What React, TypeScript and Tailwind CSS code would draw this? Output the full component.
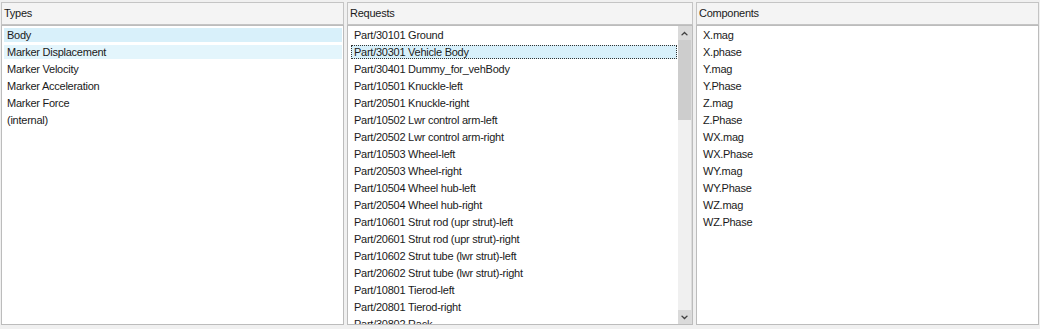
import React from "react";

const types = [
  "Body",
  "Marker Displacement",
  "Marker Velocity",
  "Marker Acceleration",
  "Marker Force",
  "(internal)",
];

const requests = [
  "Part/30101 Ground",
  "Part/30301 Vehicle Body",
  "Part/30401 Dummy_for_vehBody",
  "Part/10501 Knuckle-left",
  "Part/20501 Knuckle-right",
  "Part/10502 Lwr control arm-left",
  "Part/20502 Lwr control arm-right",
  "Part/10503 Wheel-left",
  "Part/20503 Wheel-right",
  "Part/10504 Wheel hub-left",
  "Part/20504 Wheel hub-right",
  "Part/10601 Strut rod (upr strut)-left",
  "Part/20601 Strut rod (upr strut)-right",
  "Part/10602 Strut tube (lwr strut)-left",
  "Part/20602 Strut tube (lwr strut)-right",
  "Part/10801 Tierod-left",
  "Part/20801 Tierod-right",
  "Part/30802 Rack",
];

const components = [
  "X.mag",
  "X.phase",
  "Y.mag",
  "Y.Phase",
  "Z.mag",
  "Z.Phase",
  "WX.mag",
  "WX.Phase",
  "WY.mag",
  "WY.Phase",
  "WZ.mag",
  "WZ.Phase",
];

type RowState = "none" | "selected" | "hover" | "focus";

function Row({ label, state }: { label: string; state: RowState }) {
  return (
    <div className="h-[17px] pt-[2px] pb-[1px] pl-[2px] pr-[1px]">
      <div
        className={
          "h-[14px] pl-[3px] leading-[14px] whitespace-nowrap tracking-[-0.25px] " +
          (state === "selected"
            ? "bg-[#d8f0fa]"
            : state === "hover"
              ? "bg-[#e3f5fc]"
              : state === "focus"
                ? "bg-[#d8f0fa] outline outline-1 outline-dotted outline-[#333] -outline-offset-1"
                : "")
        }
      >
        {label}
      </div>
    </div>
  );
}

function Header({ title }: { title: string }) {
  return (
    <div className="h-[23px] border border-[#c4c4c4] bg-[#f4f4f4] pl-[2px] leading-[21px] tracking-[-0.25px]">
      {title}
    </div>
  );
}

function Chevron({ up }: { up?: boolean }) {
  return (
    <svg width="7" height="5" viewBox="0 0 7 5" className={up ? "" : "rotate-180"}>
      <path d="M0 4 L3.5 0.5 L7 4 L5.8 4.6 L3.5 2.4 L1.2 4.6 Z" fill="#404040" />
    </svg>
  );
}

export default function App() {
  return (
    <div
      className="w-[1040px] h-[329px] bg-[#f0f0f0] text-[11px] text-[#1a1a1a] overflow-hidden flex gap-[3px] pl-[1px] pt-[2px]"
      style={{ fontFamily: '"Liberation Sans", Arial, sans-serif' }}
    >
      {/* Types */}
      <div className="w-[343px] flex flex-col">
        <Header title="Types" />
        <div className="h-[300px] border border-[#bcbcbc] bg-white">
          {types.map((t, i) => (
            <Row key={t} label={t} state={i === 0 ? "selected" : i === 1 ? "hover" : "none"} />
          ))}
        </div>
      </div>

      {/* Requests */}
      <div className="w-[346px] flex flex-col">
        <Header title="Requests" />
        <div className="h-[300px] border border-[#bcbcbc] bg-white flex overflow-hidden">
          <div className="flex-1 overflow-hidden pl-[1px]">
            {requests.map((r, i) => (
              <Row key={r} label={r} state={i === 1 ? "focus" : "none"} />
            ))}
          </div>
          <div className="w-[14px] bg-[#f0f0f0] flex flex-col border-r border-[#dcdcdc]">
            <div className="h-[14px] bg-[#dadada] flex items-center justify-center">
              <Chevron up />
            </div>
            <div className="h-[80px] bg-[#cdcdcd]" />
            <div className="flex-1" />
            <div className="h-[14px] bg-[#dadada] flex items-center justify-center">
              <Chevron />
            </div>
          </div>
        </div>
      </div>

      {/* Components */}
      <div className="w-[343px] flex flex-col">
        <Header title="Components" />
        <div className="h-[300px] border border-[#bcbcbc] bg-white pl-[1px]">
          {components.map((c) => (
            <Row key={c} label={c} state="none" />
          ))}
        </div>
      </div>
    </div>
  );
}
